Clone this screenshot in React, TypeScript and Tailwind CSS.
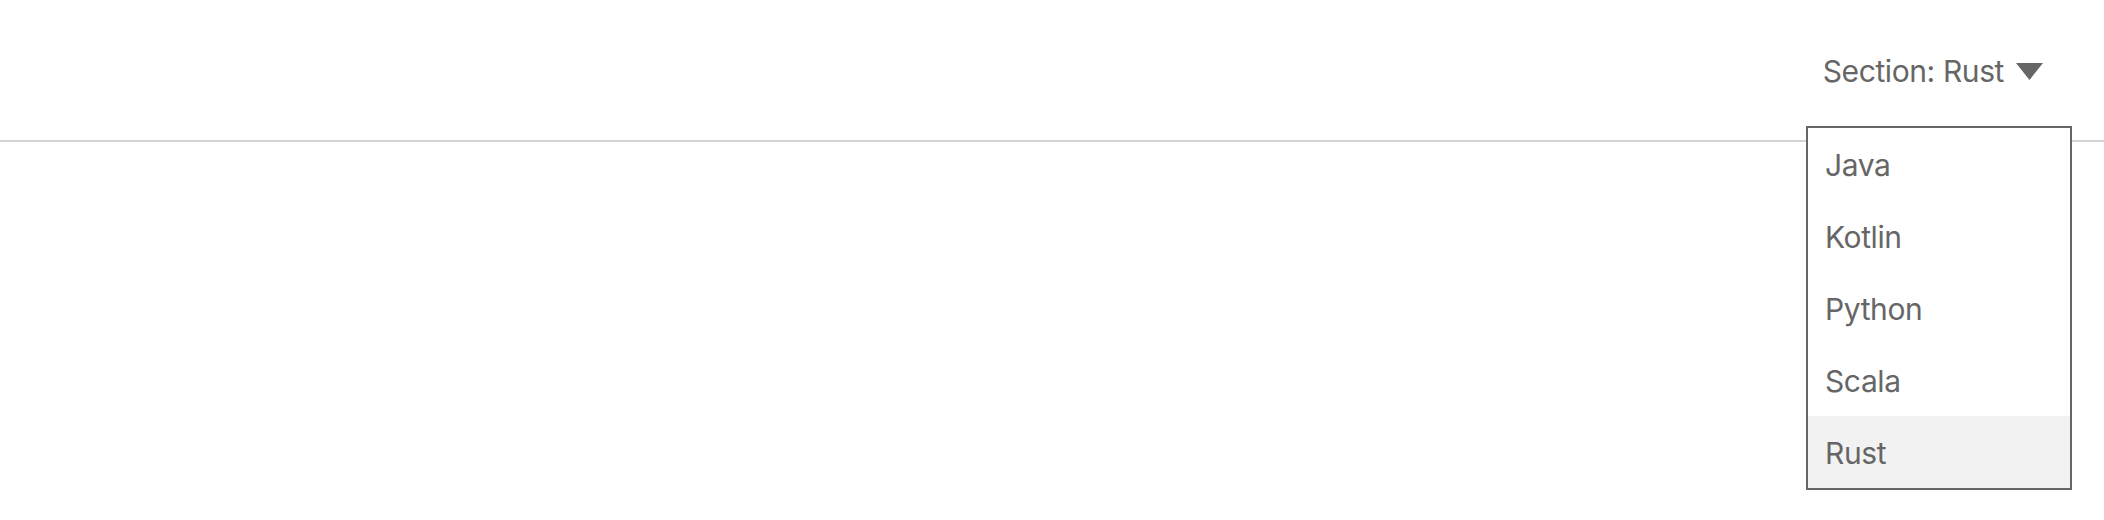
const sections = ['Java', 'Kotlin', 'Python', 'Scala', 'Rust'];

export default function App() {
  const current = 'Rust';

  return (
    <div className="relative h-[520px] w-full bg-white font-['Inter',sans-serif] text-[#666666]">
      <header className="flex h-[142px] items-center justify-end border-b-2 border-[#d4d4d4] pr-[61px]">
        <button className="flex items-center gap-[12px] pt-[2px] text-[30px] leading-none tracking-[-0.4px]">
          <span>Section: {current}</span>
          <svg width="27" height="17" viewBox="0 0 27 17" className="mt-[1px]">
            <path d="M0 0 L27 0 L13.5 17 Z" fill="#666666" />
          </svg>
        </button>
      </header>

      {/* open menu */}
      <ul className="absolute right-[32px] top-[126px] w-[266px] border-2 border-[#666666] bg-white">
        {sections.map((s) => (
          <li
            key={s}
            className={`flex h-[72px] items-center pl-[17px] pt-[2px] text-[30px] leading-none tracking-[-0.4px] ${
              s === current ? 'bg-[#f2f2f2]' : ''
            }`}
          >
            {s}
          </li>
        ))}
      </ul>
    </div>
  );
}
